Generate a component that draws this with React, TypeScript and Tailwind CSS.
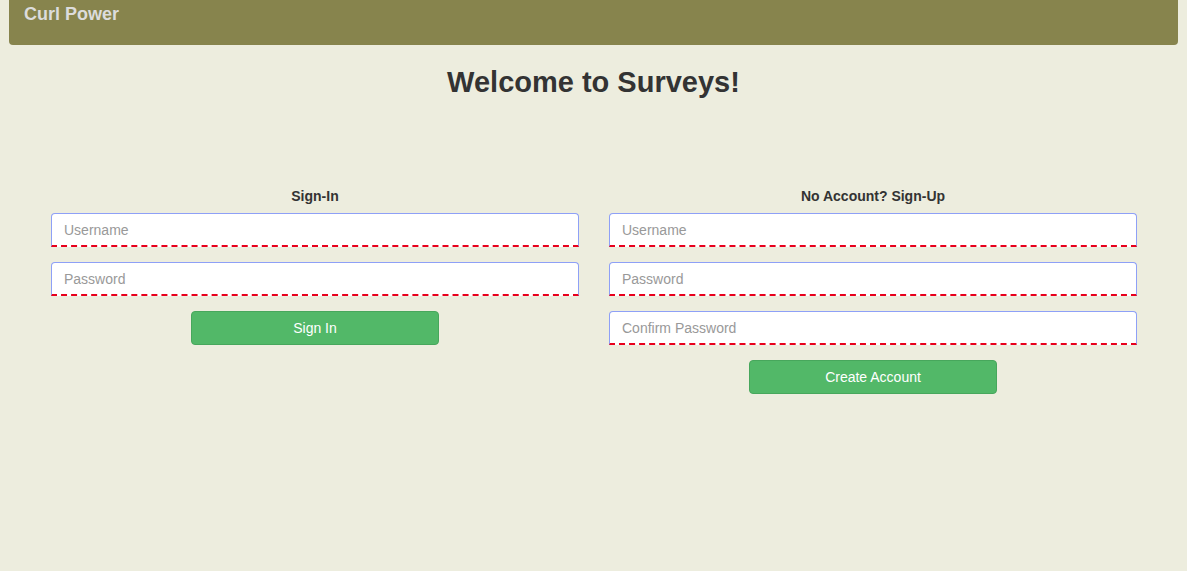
const Field: React.FC<{ placeholder: string; type?: string }> = ({ placeholder, type = "text" }) => (
  <input
    type={type}
    placeholder={placeholder}
    className="block w-full h-[34px] px-3 bg-white text-[14px] text-[#555] placeholder:text-[#999] border-t border-x border-[#8ea0f7] rounded-t-[4px] outline-none"
    style={{ borderBottom: "2px dashed #e8001c" }}
  />
)

const Button: React.FC<{ label: string }> = ({ label }) => (
  <button className="mx-auto block w-[248px] h-[34px] rounded-[4px] bg-[#52b868] border border-[#47a75c] text-white text-[14px]">
    {label}
  </button>
)

export default function App() {
  return (
    <div className="min-h-[571px] bg-[#ededde] font-['Liberation_Sans',Arial,sans-serif] text-[#333]">
      <div className="px-[9px]">
        <nav className="h-[45px] bg-[#87844d] rounded-b-[4px] pl-[15px] pt-[1px]">
          <span className="text-[18px] font-bold text-[#dcdcdc]">Curl Power</span>
        </nav>
      </div>
      <h1 className="text-center text-[29px] font-bold mt-[19px] leading-[36px]">Welcome to Surveys!</h1>
      <div className="grid grid-cols-2 gap-[30px] pl-[51px] pr-[50px] mt-[86px]">
        <div>
          <div className="text-center text-[14px] font-bold h-[20px] leading-[20px] mb-[7px]">Sign-In</div>
          <div className="flex flex-col gap-[15px]">
            <Field placeholder="Username" />
            <Field placeholder="Password" type="password" />
            <Button label="Sign In" />
          </div>
        </div>
        <div>
          <div className="text-center text-[14px] font-bold h-[20px] leading-[20px] mb-[7px]">No Account? Sign-Up</div>
          <div className="flex flex-col gap-[15px]">
            <Field placeholder="Username" />
            <Field placeholder="Password" type="password" />
            <Field placeholder="Confirm Password" type="password" />
            <Button label="Create Account" />
          </div>
        </div>
      </div>
    </div>
  )
}
